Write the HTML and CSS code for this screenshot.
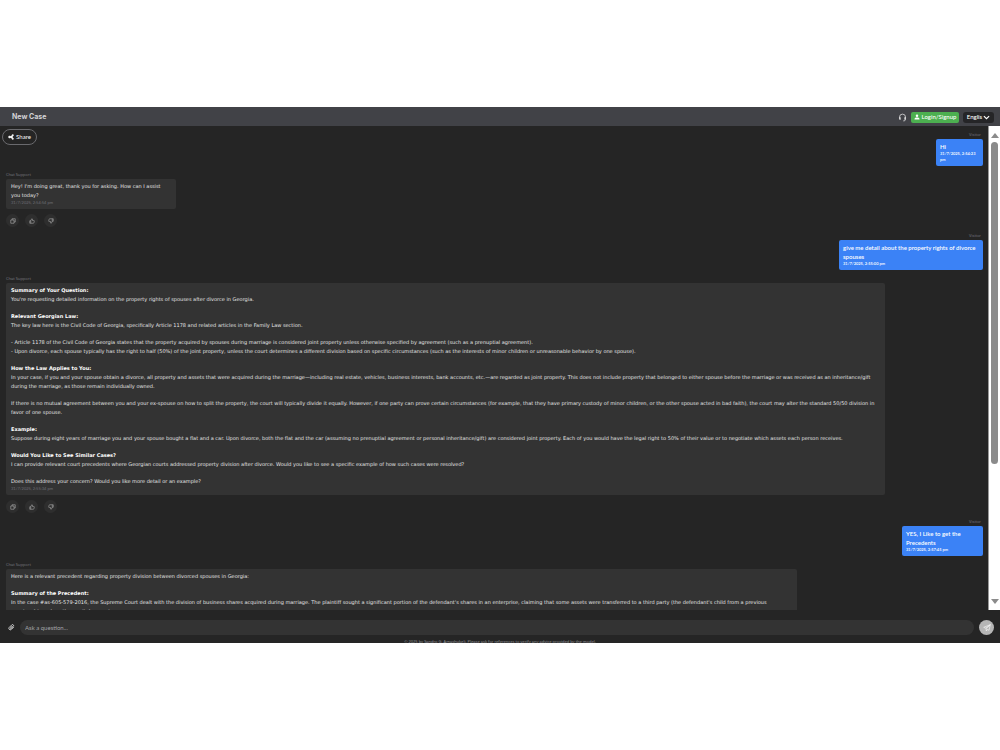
FILE: index.html
```html
<!DOCTYPE html>
<html lang="en">
<head>
<meta charset="utf-8">
<title>New Case</title>
<link rel="stylesheet" href="styles.css">
</head>
<body>
<svg class="defs" aria-hidden="true">
  <symbol id="copy" viewBox="0 0 24 24"><path d="M3 8h13v13H3zM8 8V3h13v13h-5" /></symbol>
  <symbol id="up" viewBox="0 0 24 24"><path d="M3 11h4v10H3zM7 11l4-8c2 0 3 1 3 3v4h5c2 0 2.500 1 2 3l-1.500 6c-.5 1.500-1 2-2.500 2H7" /></symbol>
  <symbol id="down" viewBox="0 0 24 24"><path d="M21 13h-4V3h4zM17 13l-4 8c-2 0-3-1-3-3v-4H5c-2 0-2.500-1-2-3l1.500-6C5 3.500 5.500 3 7 3h10" /></symbol>
</svg>
<div class="app">
  <header class="topbar">
    <h1 class="title">New Case</h1>
    <div class="tools">
      <button class="icon-btn" aria-label="Support">
        <svg class="headset" viewBox="0 0 24 24"><path d="M4 14v-3a8 8 0 0 1 16 0v3M20 17c0 3-2 4-6 4" /><path class="solid" d="M3 11h4v7H5a2 2 0 0 1-2-2zM17 11h4v5a2 2 0 0 1-2 2h-2z" /></svg>
      </button>
      <button class="login"><svg class="user" viewBox="0 0 24 24"><circle cx="12" cy="7" r="5" /><path d="M2 22c0-6 3-8 10-8s10 2 10 8z" /></svg>Login/Signup</button>
      <button class="lang">Englis<svg class="chevron" viewBox="0 0 24 24"><path d="M3 7l9 9 9-9" /></svg></button>
    </div>
  </header>

  <main class="body">
    <button class="share"><svg class="share-icon" viewBox="0 0 24 24"><path d="M19 5L6 12l13 7" /><circle cx="19" cy="5" r="3" /><circle cx="6" cy="12" r="4" /><circle cx="19" cy="19" r="3" /></svg>Share</button>
    <div class="chat">
      <section class="msg visitor">
        <span class="who">Visitor</span>
        <div class="bubble narrow"><p>Hi</p><time>31/7/2025, 2:54:23<br>pm</time></div>
      </section>
      <section class="msg">
        <span class="who">Chat Support</span>
        <div class="bubble small"><p>Hey! I'm doing great, thank you for asking. How can I assist<br>you today?</p><time>31/7/2025, 2:54:54 pm</time></div>
        <div class="actions">
          <button aria-label="Copy"><svg viewBox="0 0 24 24"><use href="#copy" /></svg></button>
          <button aria-label="Like"><svg viewBox="0 0 24 24"><use href="#up" /></svg></button>
          <button aria-label="Dislike"><svg viewBox="0 0 24 24"><use href="#down" /></svg></button>
        </div>
      </section>
      <section class="msg visitor">
        <span class="who">Visitor</span>
        <div class="bubble medium"><p>give me detail about the property rights of divorce<br>spouses</p><time>31/7/2025, 2:55:00 pm</time></div>
      </section>
      <section class="msg">
        <span class="who">Chat Support</span>
        <div class="bubble full">
          <p><strong>Summary of Your Question:</strong><br>You're requesting detailed information on the property rights of spouses after divorce in Georgia.</p>
          <p><strong>Relevant Georgian Law:</strong><br>The key law here is the Civil Code of Georgia, specifically Article 1178 and related articles in the Family Law section.</p>
          <p>- Article 1178 of the Civil Code of Georgia states that the property acquired by spouses during marriage is considered joint property unless otherwise specified by agreement (such as a prenuptial agreement).<br>- Upon divorce, each spouse typically has the right to half (50%) of the joint property, unless the court determines a different division based on specific circumstances (such as the interests of minor children or unreasonable behavior by one spouse).</p>
          <p><strong>How the Law Applies to You:</strong><br>In your case, if you and your spouse obtain a divorce, all property and assets that were acquired during the marriage—including real estate, vehicles, business interests, bank accounts, etc.—are regarded as joint property. This does not include property that belonged to either spouse before the marriage or was received as an inheritance/gift<br>during the marriage, as those remain individually owned.</p>
          <p>If there is no mutual agreement between you and your ex-spouse on how to split the property, the court will typically divide it equally. However, if one party can prove certain circumstances (for example, that they have primary custody of minor children, or the other spouse acted in bad faith), the court may alter the standard 50/50 division in<br>favor of one spouse.</p>
          <p><strong>Example:</strong><br>Suppose during eight years of marriage you and your spouse bought a flat and a car. Upon divorce, both the flat and the car (assuming no prenuptial agreement or personal inheritance/gift) are considered joint property. Each of you would have the legal right to 50% of their value or to negotiate which assets each person receives.</p>
          <p><strong>Would You Like to See Similar Cases?</strong><br>I can provide relevant court precedents where Georgian courts addressed property division after divorce. Would you like to see a specific example of how such cases were resolved?</p>
          <p>Does this address your concern? Would you like more detail or an example?</p>
          <time>31/7/2025, 2:55:34 pm</time>
        </div>
        <div class="actions">
          <button aria-label="Copy"><svg viewBox="0 0 24 24"><use href="#copy" /></svg></button>
          <button aria-label="Like"><svg viewBox="0 0 24 24"><use href="#up" /></svg></button>
          <button aria-label="Dislike"><svg viewBox="0 0 24 24"><use href="#down" /></svg></button>
        </div>
      </section>
      <section class="msg visitor">
        <span class="who">Visitor</span>
        <div class="bubble short"><p>YES, I Like to get the<br>Precedents</p><time>31/7/2025, 2:57:45 pm</time></div>
      </section>
      <section class="msg">
        <span class="who">Chat Support</span>
        <div class="bubble wide">
          <p>Here is a relevant precedent regarding property division between divorced spouses in Georgia:</p>
          <p><strong>Summary of the Precedent:</strong><br>In the case #as-605-579-2016, the Supreme Court dealt with the division of business shares acquired during marriage. The plaintiff sought a significant portion of the defendant's shares in an enterprise, claiming that some assets were transferred to a third party (the defendant's child from a previous<br>marriage) to reduce the marital property.</p>
        </div>
      </section>
    </div>
    <div class="scrollbar" aria-hidden="true">
      <svg class="arrow" viewBox="0 0 10 6"><path d="M5 0l5 6H0z" /></svg>
      <div class="track"><div class="thumb"></div></div>
      <svg class="arrow" viewBox="0 0 10 6"><path d="M0 0h10L5 6z" /></svg>
    </div>
  </main>

  <form class="composer">
    <button type="button" class="icon-btn" aria-label="Attach file"><svg class="clip" viewBox="0 0 24 24"><path d="M20 10l-9 9a5 5 0 0 1-7-7l9-9a3.500 3.500 0 0 1 5 5l-8 8a1.500 1.500 0 0 1-2-2l7-7" /></svg></button>
    <input class="ask" type="text" placeholder="Ask a question..." aria-label="Ask a question">
    <button type="button" class="send" aria-label="Send"><svg viewBox="0 0 24 24"><path d="M22 2L2 10l7 3zM22 2L9 13l1 8 3-5 5 3z" /></svg></button>
  </form>
  <footer class="legal">© 2025 by Sandro G. Amashukeli. Please ask for references to verify any advice provided by the model.</footer>
</div>
</body>
</html>
```
FILE: styles.css
```css
* { box-sizing: border-box; }
body {
  margin: 0;
  height: 100vh;
  padding: 107px 0;
  background: #fff;
  color: #e4e4e4;
  font: 5px/9px "DejaVu Sans", sans-serif;
}
button, input { font: inherit; color: inherit; border: 0; background: none; padding: 0; margin: 0; }
button { display: flex; align-items: center; justify-content: center; }
svg { display: block; fill: none; stroke: currentColor; }
p { margin: 0; }
.defs { position: absolute; width: 0; height: 0; }

.app { display: flex; flex-direction: column; height: 100%; background: #252525; overflow: hidden; }

.topbar {
  display: flex;
  align-items: center;
  justify-content: space-between;
  flex: none;
  height: 19px;
  padding: 0 6px 0 12px;
  background: #414247;
}
.title { margin: 0; font: 700 7px/9px Inter, sans-serif; color: #d3d3d6; }
.tools { display: flex; align-items: center; gap: 4px; padding-top: 1px; font: 500 6px/8px Lato, sans-serif; }
.headset { width: 9px; height: 9px; stroke-width: 2; }
.headset .solid { fill: currentColor; stroke: none; }
.login { gap: 2px; height: 11px; width: 48px; border-radius: 2px; background: #4caf50; color: #fff; }
.user { width: 6px; height: 6px; fill: currentColor; stroke: none; }
.lang { gap: 1px; height: 11px; width: 31px; border-radius: 3px; background: #252527; color: #fff; }
.chevron { width: 7px; height: 7px; stroke-width: 4; }

.body { position: relative; display: flex; flex: 1; min-height: 0; }
.share {
  position: absolute;
  top: 3px;
  left: 2px;
  gap: 2px;
  width: 35px;
  height: 16px;
  border: 1px solid #6a6a6e;
  border-radius: 8px;
  color: #fff;
  font: 6px/8px Lato, sans-serif;
}
.share-icon { width: 6px; height: 6px; fill: currentColor; stroke-width: 2; }

.chat { display: flex; flex-direction: column; gap: 5px; flex: 1; min-width: 0; padding: 5px 5px 0 6px; overflow: hidden; }
.msg { display: flex; flex-direction: column; align-items: flex-start; flex: none; }
.visitor { align-items: flex-end; }
.who { height: 8px; font: 4px/8px "Noto Sans", sans-serif; color: #77777f; }
.visitor .who { padding-right: 2px; }
.bubble { padding: 3px 4px 3px 5px; border-radius: 2px; background: #333; white-space: nowrap; }
.bubble p + p { margin-top: 8px; }
.bubble time { display: block; font: 4px/6px Lato, sans-serif; color: #6f6f76; }
.bubble strong { color: #fff; }
.visitor .bubble { padding-left: 4px; background: #3b82f6; color: #fff; font: 600 6px/9px Lato, sans-serif; }
.visitor .bubble time { color: #fff; font: 600 4px/6px Lato, sans-serif; }
.narrow { width: 47px; }
.small { width: 170px; }
.medium { width: 144px; }
.short { width: 81px; }
.full { width: 90%; }
.wide { width: 81%; }

.actions { display: flex; gap: 6px; margin-top: 5px; }
.actions button { width: 13px; height: 13px; border-radius: 50%; background: #2e2e2e; color: #c4c4c4; }
.actions svg { width: 6px; height: 6px; stroke-width: 2; }

.scrollbar {
  display: flex;
  flex-direction: column;
  align-items: center;
  gap: 4px;
  width: 12px;
  padding: 7px 0 6px;
  background: #fff;
  border-left: 1px solid #999;
}
.arrow { width: 8px; height: 5px; fill: #8b8b8b; stroke: none; }
.track { flex: 1; width: 7px; }
.thumb { height: 71%; border-radius: 4px; background: #8b8b8b; }

.composer { display: flex; align-items: center; flex: none; gap: 5px; height: 29px; padding: 6px 6px 0 8px; }
.clip { width: 7px; height: 7px; stroke-width: 3; }
.ask { flex: 1; min-width: 0; height: 15px; padding: 0 5px; border-radius: 8px; background: #333; font: 6px/9px Lato, sans-serif; }
.ask::placeholder { color: #a3a3a8; opacity: 1; }
.send { width: 15px; height: 15px; border-radius: 50%; background: #b5b5b5; color: #f4f4f4; }
.send svg { width: 8px; height: 8px; stroke-width: 2; }
.legal { flex: none; height: 4px; text-align: center; font: 4px/5px "Noto Sans", sans-serif; color: #96969a; }
```
